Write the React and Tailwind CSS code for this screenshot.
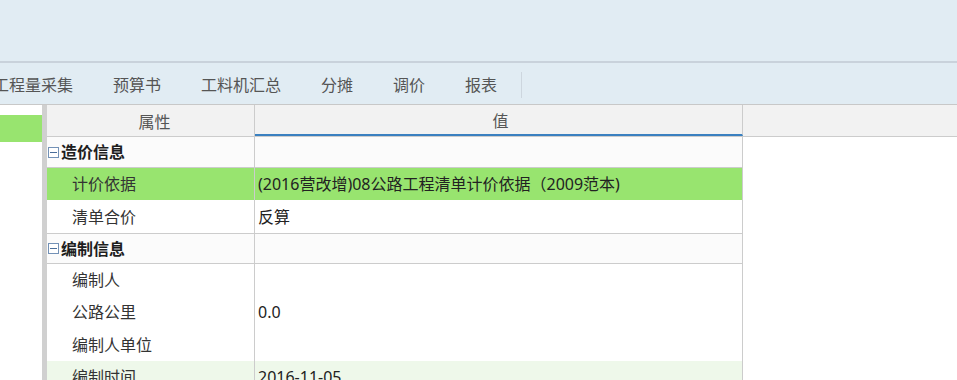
import React from "react";

const tabs = ["工程量采集", "预算书", "工料机汇总", "分摊", "调价", "报表"];

function Minus() {
  return (
    <span className="mr-[2px] flex h-[11px] w-[11px] shrink-0 items-center justify-center border border-[#7391b6] bg-white">
      <span className="h-px w-[7px] bg-[#4a6d99]" />
    </span>
  );
}

function GroupRow({ title, h }) {
  return (
    <div className={`flex w-[696px] ${h} border-b border-[#cccccc] bg-[#fbfbfb]`}>
      <div className="flex w-[208px] items-center border-r border-[#cccccc] pl-[1px] text-[16px] font-bold text-[#1e1e1e]">
        <Minus />
        {title}
      </div>
      <div className="w-[488px] border-r border-[#cccccc]" />
    </div>
  );
}

function Row({ label, value, h, bg = "bg-white", border = false }) {
  return (
    <div className={`flex w-[696px] ${h} ${bg} ${border ? "border-b border-[#cccccc]" : ""}`}>
      <div className="flex w-[208px] items-center border-r border-[#cccccc] pl-[25px] text-[16px] text-[#333]">
        {label}
      </div>
      <div className="flex w-[488px] items-center border-r border-[#cccccc] pl-[3px] text-[16px] text-[#222]">
        {value}
      </div>
    </div>
  );
}

export default function App() {
  return (
    <div
      className="h-[380px] w-[957px] overflow-hidden bg-white"
      style={{ fontFamily: '"Noto Sans", "Noto Sans CJK SC", sans-serif' }}
    >
      {/* 顶部工具区 */}
      <div className="h-[63px] border-b-2 border-[#c9d2db] bg-[#e1ecf3]" />

      {/* 页签 */}
      <div className="flex h-[42px] items-center border-b border-[#c8c8c8] bg-[#e1ecf3] pt-[3px]">
        <div className="ml-[-7px] flex items-center">
          {tabs.map((t) => (
            <span key={t} className="mr-[40px] text-[16px] leading-none text-[#555]">
              {t}
            </span>
          ))}
          <span className="ml-[-16px] h-[26px] w-px bg-[#cdd6de]" />
        </div>
      </div>

      <div className="flex h-[275px]">
        {/* 左侧树 */}
        <div className="w-[42px] pt-[10px]">
          <div className="h-[27px] bg-[#98e46f]" />
        </div>
        <div className="w-[5px] bg-[#d0d0d0]" />

        {/* 属性表 */}
        <div className="flex-1">
          <div className="flex h-[32px] border-b border-[#cccccc] bg-[#f2f2f2]">
            <div className="flex w-[208px] items-center justify-center border-r border-[#cccccc] pl-[8px] pt-[2px] text-[16px] text-[#555]">
              属性
            </div>
            <div className="flex w-[488px] items-center justify-center border-r border-[#cccccc] border-b-2 border-b-[#3a80c0] pl-[4px] pt-[2px] text-[16px] text-[#555]">
              值
            </div>
          </div>

          <GroupRow title="造价信息" h="h-[31px]" />
          <Row
            label="计价依据"
            value="(2016营改增)08公路工程清单计价依据（2009范本)"
            h="h-[32px]"
            bg="bg-[#98e46f]"
          />
          <Row label="清单合价" value="反算" h="h-[34px]" border />
          <GroupRow title="编制信息" h="h-[30px]" />
          <Row label="编制人" value="" h="h-[32px]" />
          <Row label="公路公里" value="0.0" h="h-[32px]" />
          <Row label="编制人单位" value="" h="h-[33px]" />
          <Row label="编制时间" value="2016-11-05" h="h-[32px]" bg="bg-[#eef8ea]" />
        </div>
      </div>
    </div>
  );
}
